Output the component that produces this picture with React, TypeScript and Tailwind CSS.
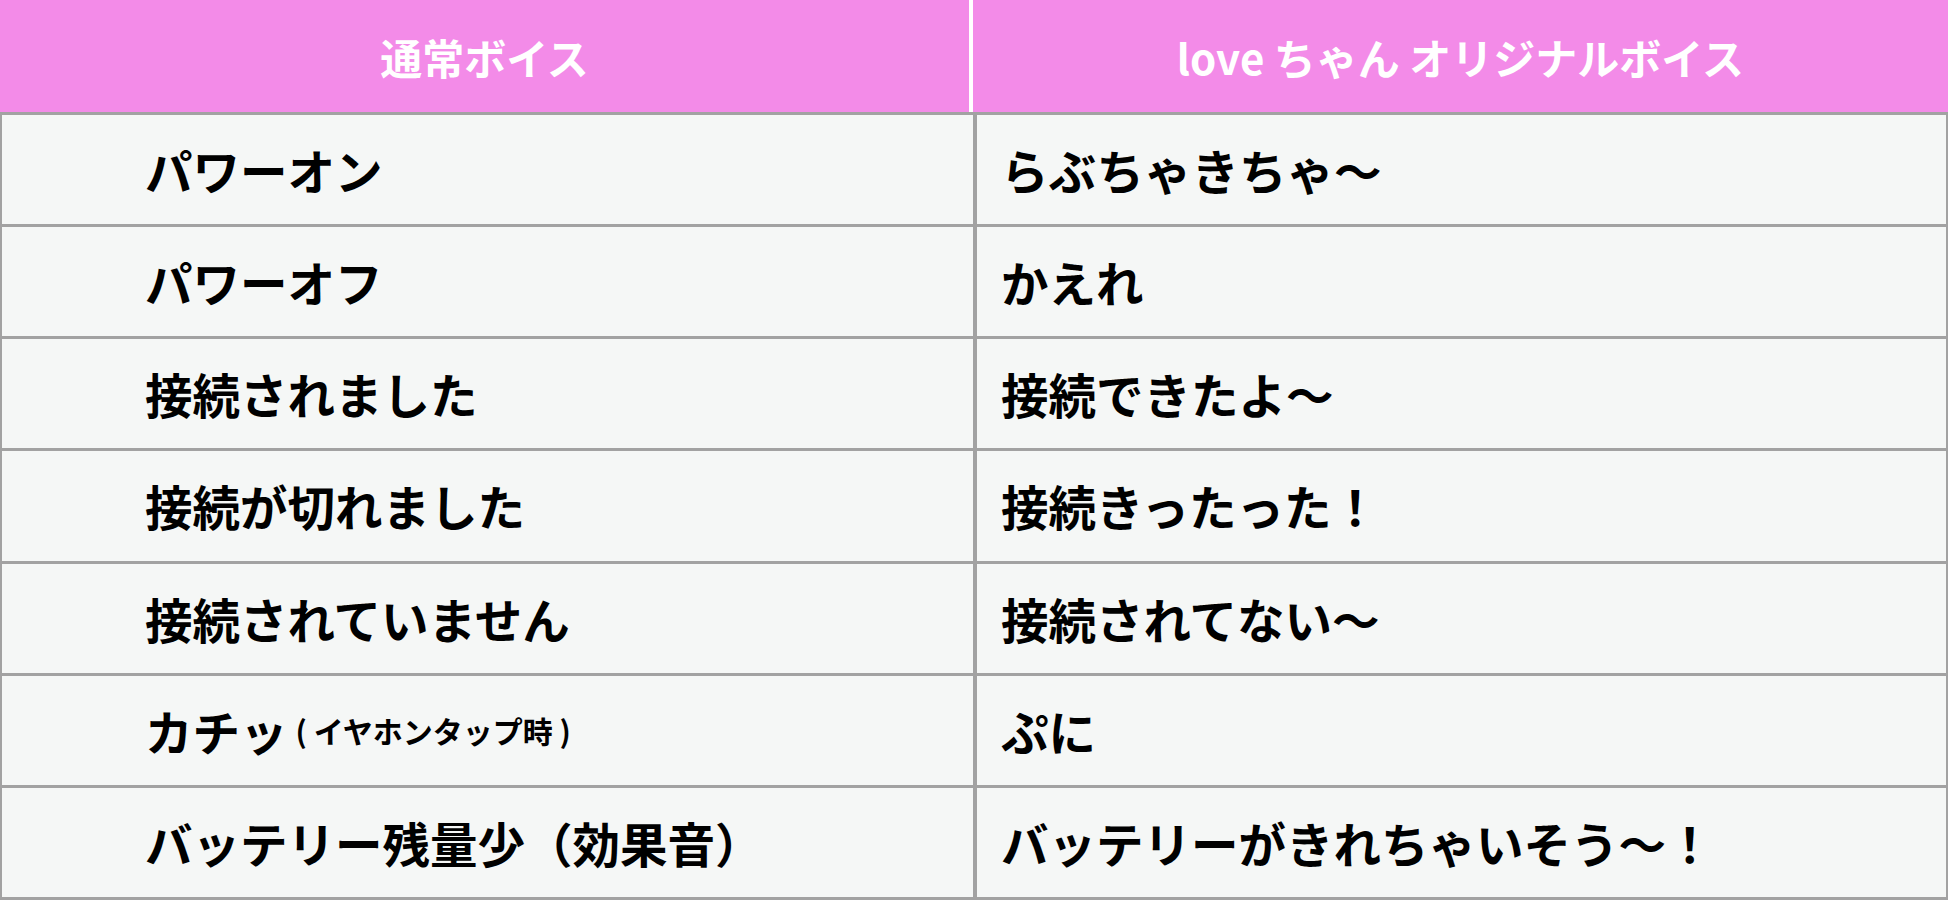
import React from 'react';

type Row = {
  normal: React.ReactNode;
  love: string;
};

const rows: Row[] = [
  { normal: 'パワーオン', love: 'らぶちゃきちゃ〜' },
  { normal: 'パワーオフ', love: 'かえれ' },
  { normal: '接続されました', love: '接続できたよ〜' },
  { normal: '接続が切れました', love: '接続きったった！' },
  { normal: '接続されていません', love: '接続されてない〜' },
  {
    normal: (
      <>
        カチッ<span className="text-[30px] ml-[8px]">( イヤホンタップ時 )</span>
      </>
    ),
    love: 'ぷに',
  },
  { normal: 'バッテリー残量少（効果音）', love: 'バッテリーがきれちゃいそう〜！' },
];

export default function App() {
  return (
    <div
      className="w-[1950px] h-[900px] bg-white overflow-hidden"
      style={{ fontFamily: '"Noto Sans CJK JP", "Noto Sans", sans-serif' }}
    >
      <div className="w-[1948px]">
        {/* header */}
        <div className="flex h-[112px] bg-[#f38be8] text-white text-[42px] font-semibold">
          <div className="w-[973px] flex items-center justify-center border-r-4 border-white">
            通常ボイス
          </div>
          <div className="flex-1 flex items-center justify-center">love ちゃん オリジナルボイス</div>
        </div>

        {/* body */}
        <div className="grid grid-cols-[971px_1fr] grid-rows-7 gap-x-[4px] gap-y-[3px] h-[788px] bg-[#a2a2a2] pt-[3px] pb-[3px] pl-[2px] pr-[2px]">
          {rows.map((row, i) => (
            <React.Fragment key={i}>
              <div className="bg-[#f5f7f6] flex items-center pl-[143px] text-[47.5px] font-bold text-black whitespace-nowrap">
                {row.normal}
              </div>
              <div className="bg-[#f5f7f6] flex items-center pl-[24px] text-[47.5px] font-bold text-black whitespace-nowrap">
                {row.love}
              </div>
            </React.Fragment>
          ))}
        </div>
      </div>
    </div>
  );
}
